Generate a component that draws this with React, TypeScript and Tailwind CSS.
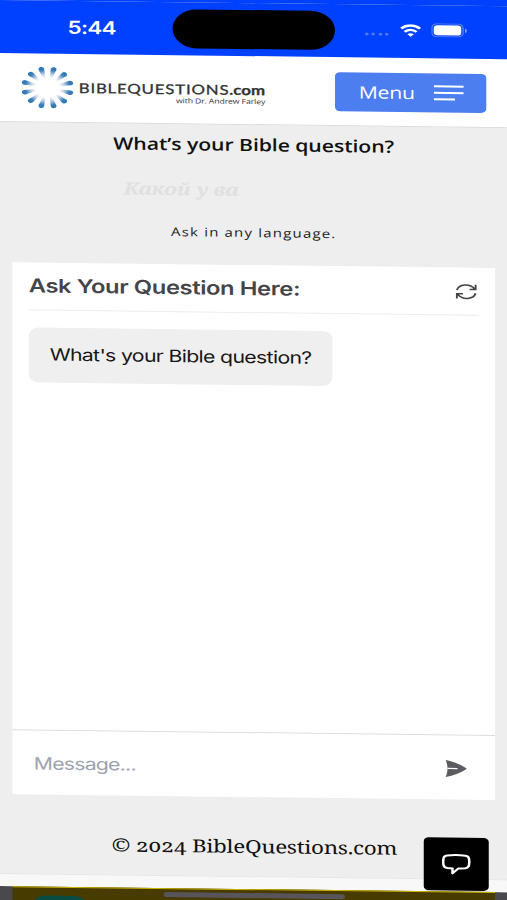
const rays = [15, 45, 75, 105, 135, 165, 195, 225, 255, 285, 315, 345];

const BurstLogo = () => (
  <svg className="w-[44px] h-[44px] shrink-0" viewBox="-22 -22 44 44">
    <defs>
      <linearGradient id="ray" x1="0" y1="-21" x2="0" y2="-9" gradientUnits="userSpaceOnUse">
        <stop offset="0" stopColor="#2478b5" />
        <stop offset="0.3" stopColor="#3f80bc" />
        <stop offset="1" stopColor="#c4c8ea" stopOpacity="0" />
      </linearGradient>
    </defs>
    {rays.map((angle) => (
      <path
        key={angle}
        d="M-2.3 -18.8 A2.3 2.3 0 0 1 2.3 -18.8 L0.8 -9 H-0.8 Z"
        fill="url(#ray)"
        transform={`rotate(${angle})`}
      />
    ))}
  </svg>
);

const StatusBar = () => (
  <div className="relative flex justify-between items-center h-[53px] pl-[54px] pr-[32px] bg-[#0040ff] text-white">
    <span className="font-[Inter,sans-serif] text-[18px] font-semibold leading-none tracking-[-0.6px]">
      5:44
    </span>
    <div className="absolute left-[138px] top-[7px] w-[130px] h-[39px] rounded-full bg-black" />
    <div className="flex items-center -mt-[3px]">
      <div className="flex gap-[2.5px] mr-[9px] mt-[8px]">
        <span className="w-[3px] h-[3px] rounded-full bg-white/30" />
        <span className="w-[3px] h-[3px] rounded-full bg-white/30" />
        <span className="w-[3px] h-[3px] rounded-full bg-white/30" />
        <span className="w-[3px] h-[3px] rounded-full bg-white/30" />
      </div>
      <svg className="w-[17px] h-[13px] mr-[8px]" viewBox="0 0 17 13" fill="none" stroke="#fff" strokeWidth="2.4">
        <path d="M1 4.6 C5 0.4 12 0.4 16 4.6" />
        <path d="M3.8 7.9 C6.4 5.2 10.6 5.2 13.2 7.9" />
        <path d="M8.5 12.8 L5.9 10.2 C7.3 9 9.7 9 11.1 10.2 Z" fill="#fff" stroke="none" />
      </svg>
      <svg className="w-[29px] h-[14px]" viewBox="0 0 29 14">
        <rect x="0.5" y="0.5" width="25" height="13" rx="4" fill="none" stroke="#fff" strokeOpacity="0.35" />
        <rect x="2" y="2" width="22" height="10" rx="3" fill="#fff" />
        <path d="M27 4.7 C29 5.5 29 8.5 27 9.3 Z" fill="#fff" fillOpacity="0.5" />
      </svg>
    </div>
  </div>
);

const Header = () => (
  <header className="flex items-center h-[69px] pl-[16px] pr-[17px] bg-white border-b border-[#dcdcdc]">
    <BurstLogo />
    <div className="flex flex-col items-end ml-[3px] mt-[8px] text-[#333] whitespace-nowrap">
      <div className="font-[Lato,sans-serif] text-[13.5px] leading-[14px] tracking-[0.62px] [-webkit-text-stroke:0.3px_#333]">
        BIBLEQUESTIONS<span className="font-bold tracking-normal">.com</span>
      </div>
      <div className="font-['Open_Sans',sans-serif] text-[7px] leading-[9px] tracking-[-0.12px]">
        with Dr. Andrew Farley
      </div>
    </div>
    <button className="flex justify-between items-center w-[121px] h-[39px] ml-auto pl-[19px] pr-[18px] rounded bg-[#4c7eef] text-white font-['Open_Sans',sans-serif] text-[17px] tracking-[-0.2px]">
      <span className="mt-px">Menu</span>
      <svg className="w-[24px] h-[17px]" viewBox="0 0 24 17" stroke="#fff" strokeWidth="2">
        <path d="M0 2 H24 M0 8.5 H24 M0 15 H17" />
      </svg>
    </button>
  </header>
);

const Intro = () => (
  <div className="flex flex-col items-center h-[140px] font-['Open_Sans',sans-serif] whitespace-nowrap">
    <h1 className="mt-[8px] text-[17px] leading-[24px] font-semibold tracking-[-0.08px] text-[#111]">
      What’s your Bible question?
    </h1>
    <p className="self-start ml-[99px] mt-[21px] font-['Noto_Serif','Liberation_Serif',serif] italic font-bold text-[17px] leading-[24px] tracking-[-0.1px] text-[#e0e0e0]">
      Какой у ва
    </p>
    <p className="mt-[21px] text-[12px] leading-[20px] tracking-[0.95px] text-[#222]">
      Ask in any language.
    </p>
  </div>
);

const ChatCard = () => (
  <section className="flex flex-col w-[386px] h-[532px] ml-[10px] bg-white font-[Inter,sans-serif]">
    <div className="flex justify-between items-center h-[48px] mx-[13px] pr-px border-b border-[#ececec]">
      <h2 className="mt-[2px] text-[19px] font-semibold tracking-[-0.32px] text-[#444549] whitespace-nowrap">
        Ask Your Question Here:
      </h2>
      <svg className="w-[18px] h-[18px]" viewBox="0 0 18 18" fill="none" stroke="#444" strokeWidth="1.5">
        <path d="M1.5 7.5 C3 1.5 11.5 0 15.8 6.2 M16.5 2 V6.8 H11.7" />
        <path d="M16.5 10.5 C15 16.5 6.5 18 2.2 11.8 M1.5 16 V11.2 H6.3" />
      </svg>
    </div>
    <div className="grow px-[13px] pt-[17px]">
      <div className="flex justify-center items-center w-[243px] h-[55px] pt-px rounded-lg bg-[#efefef] text-[17px] tracking-[-0.53px] text-[#161616] whitespace-nowrap">
        What's your Bible question?
      </div>
    </div>
    <div className="flex justify-between items-center h-[65px] pl-[17px] pr-[22px] border-t border-[#dedede]">
      <span className="mt-[3px] text-[17px] tracking-[-0.62px] text-[#9ca3af]">Message...</span>
      <svg className="w-[18px] h-[18px] mt-px" viewBox="0 0 18 18">
        <path d="M0.5 0.5 C7 2 13 5 17.5 9 C13 13 7 16 0.5 17.5 C2.5 12 2.5 6 0.5 0.5 Z" fill="#5c5b60" />
        <path d="M2 9 H10" stroke="#fff" strokeWidth="1.3" />
      </svg>
    </div>
  </section>
);

const Footer = () => (
  <footer className="relative">
    <div className="flex justify-center items-center h-[79px] pt-[19px] pl-px font-['Noto_Serif','DejaVu_Serif',serif] oldstyle-nums text-[18px] tracking-[-0.28px] text-[#111] whitespace-nowrap">
      © 2024 BibleQuestions.com
    </div>
    <div className="h-[13px] bg-[#f8f8f8] border-t border-[#e6e6e6]" />
    <button className="absolute right-[15px] top-[38px] flex justify-center items-center w-[52px] h-[53px] rounded bg-black">
      <svg className="w-[24px] h-[24px]" viewBox="0 0 24 24" fill="none" stroke="#fff" strokeWidth="2" strokeLinejoin="round">
        <path d="M4.5 3 C9 2.2 15 2.2 19.5 3 C21.2 3.3 22 4.2 22.2 6 C22.5 8 22.5 10.5 22.2 12.5 C22 14.3 21 15.2 19.2 15.5 C17 15.8 15 16 13.5 16 L9 20.8 V16 L4.8 15.5 C3 15.2 2 14.3 1.8 12.5 C1.5 10.5 1.5 8 1.8 6 C2 4.2 2.8 3.3 4.5 3 Z" />
      </svg>
    </button>
  </footer>
);

const BottomStrip = () => (
  <div className="flex h-[24px] bg-[#49484c]">
    <div className="relative w-[386px] ml-[10px] overflow-hidden bg-[#483b00] border-t border-[#c9b500]">
      <div className="absolute left-[15px] top-[8px] w-[46px] h-[24px] rounded-full bg-[#084b41]" />
      <div className="absolute left-[121px] top-[3px] w-[145px] h-[5px] rounded-full bg-[#57555a]" />
    </div>
  </div>
);

const App = () => {
  return (
    <div className="w-[507px] h-[900px] overflow-hidden bg-[#0040ff]">
      <div className="w-[406px] bg-[#eeeeee] origin-top-left [transform:skewY(0.7deg)_scaleX(1.25)]">
        <StatusBar />
        <Header />
        <Intro />
        <ChatCard />
        <Footer />
        <BottomStrip />
      </div>
    </div>
  );
};

export default App;
